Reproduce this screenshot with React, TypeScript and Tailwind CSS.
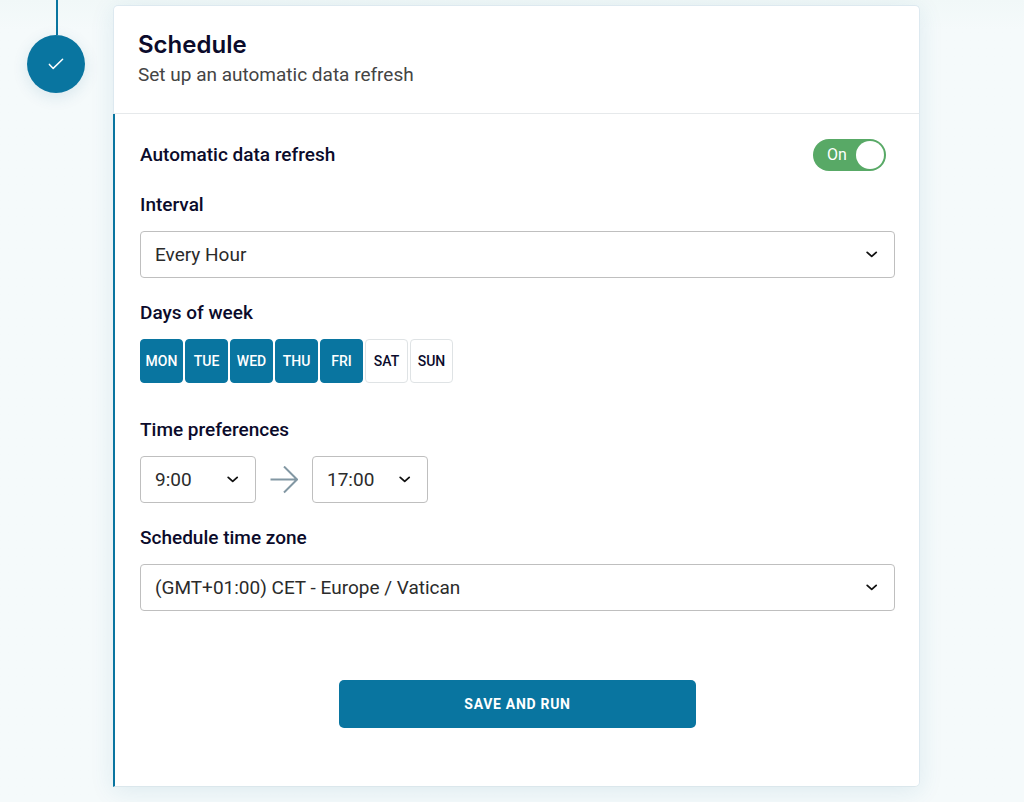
import { useState } from "react";
import type { ReactNode } from "react";

const days = ["Mon", "Tue", "Wed", "Thu", "Fri", "Sat", "Sun"];

const hours = Array.from({ length: 24 }, (_, hour) => `${hour}:00`);

const intervals = ["Every Hour", "Every Day", "Every Week", "Every Month"];

const timeZones = [
  "(GMT+01:00) CET - Europe / Vatican",
  "(GMT+00:00) GMT - Europe / London",
  "(GMT-05:00) EST - America / New York",
];

const labelClass = "block text-[19px] leading-7 font-medium text-[#0b0b2b]";

interface SelectProps {
  id: string;
  label?: string;
  options: string[];
  defaultValue: string;
  className?: string;
}

function Select({ id, label, options, defaultValue, className = "w-full" }: SelectProps) {
  return (
    <div className={`relative ${className}`}>
      <select
        id={id}
        aria-label={label}
        defaultValue={defaultValue}
        className="block h-[47px] w-full appearance-none rounded-[4px] border border-[#bfbfbf] bg-white pt-[2px] pr-10 pl-[14px] text-[19px] text-[#2b2b2b]"
      >
        {options.map((option) => (
          <option key={option}>{option}</option>
        ))}
      </select>
      <svg
        viewBox="0 0 14 10"
        className="pointer-events-none absolute top-[19px] right-4 h-[10px] w-[14px]"
        fill="none"
        stroke="#111"
        strokeWidth="1.8"
        strokeLinecap="round"
        strokeLinejoin="round"
      >
        <path d="M2.2 2.4 L6.7 6.4 L11.2 2.4" />
      </svg>
    </div>
  );
}

function Field({ id, label, children }: { id: string; label: string; children: ReactNode }) {
  return (
    <div>
      <label htmlFor={id} className={`${labelClass} mb-3`}>
        {label}
      </label>
      {children}
    </div>
  );
}

export default function App() {
  const [enabled, setEnabled] = useState(true);
  const [selected, setSelected] = useState(["Mon", "Tue", "Wed", "Thu", "Fri"]);

  const toggleDay = (day: string) =>
    setSelected((current) =>
      current.includes(day) ? current.filter((d) => d !== day) : [...current, day]
    );

  return (
    <main className="flex min-h-screen items-start bg-[#f5fafb] bg-linear-to-b from-[#f1f8f8] to-[#f5fafb] to-[30px] pr-[104px] pb-3 pl-[27px] font-['Roboto',sans-serif]">
      {/* Step marker */}
      <div className="mr-7 flex shrink-0 flex-col items-center">
        <div className="ml-0.5 h-[35px] w-[2px] bg-[#0975a0]" />
        <div className="flex size-[58px] items-center justify-center rounded-full bg-[#0975a0] shadow-[0_4px_16px_rgba(20,90,130,0.12)]">
          <svg viewBox="0 0 18 14" className="h-[14px] w-[18px]" fill="none" stroke="#fff" strokeWidth="1.5" strokeLinecap="round" strokeLinejoin="round">
            <path d="M2.4 7.4 L6.2 11.4 L15.6 2.2" />
          </svg>
        </div>
      </div>

      <section className="mt-[5px] min-w-0 grow rounded-[5px] rounded-bl-none shadow-[0_4px_24px_rgba(30,110,150,0.11)]">
        <header className="rounded-t-[5px] border border-[#dde9f0] border-b-[#e6e9eb] bg-white px-6 pt-[23px] pb-6">
          <h2 className="font-['Inter',sans-serif] text-[24px] leading-8 font-semibold text-[#0b0b2b]">Schedule</h2>
          <p className="text-[19px] leading-7 text-[#444]">Set up an automatic data refresh</p>
        </header>

        <div className="rounded-br-[5px] border-r border-b border-l-2 border-r-[#dde9f0] border-b-[#dbe7ec] border-l-[#0975a0] bg-white pt-[25px] pr-6 pb-[58px] pl-[25px]">
          <div className="mb-5 flex items-center justify-between pr-[9px]">
            <label htmlFor="auto-refresh" className={labelClass}>
              Automatic data refresh
            </label>
            <label className="relative flex h-8 w-[73px] cursor-pointer items-center rounded-full bg-gray-400 has-checked:bg-[#58a966]">
              <input
                id="auto-refresh"
                type="checkbox"
                role="switch"
                checked={enabled}
                onChange={() => setEnabled(!enabled)}
                className="peer absolute inset-0 cursor-pointer appearance-none rounded-full"
              />
              <span className="ml-auto pr-3 text-[16px] text-white peer-checked:mr-auto peer-checked:ml-0 peer-checked:pr-0 peer-checked:pl-[14px]">
                {enabled ? "On" : "Off"}
              </span>
              <span className="pointer-events-none absolute left-[2px] size-7 rounded-full bg-white peer-checked:right-[2px] peer-checked:left-auto" />
            </label>
          </div>

          <div className="mb-[21px]">
            <Field id="interval" label="Interval">
              <Select id="interval" options={intervals} defaultValue="Every Hour" />
            </Field>
          </div>

          <fieldset className="mb-[33px]">
            <legend className={`${labelClass} mb-3`}>Days of week</legend>
            <div className="flex gap-[2px]">
              {days.map((day) => (
                <button
                  key={day}
                  type="button"
                  aria-pressed={selected.includes(day)}
                  onClick={() => toggleDay(day)}
                  className="h-11 w-[43px] rounded-[4px] border border-[#dfe3e5] bg-white text-[14px] font-medium text-[#0b0b2b] uppercase aria-pressed:border-[#0975a0] aria-pressed:bg-[#0975a0] aria-pressed:text-white"
                >
                  {day}
                </button>
              ))}
            </div>
          </fieldset>

          <fieldset className="mb-[21px]">
            <legend className={`${labelClass} mb-3`}>Time preferences</legend>
            <div className="flex items-center gap-[14px]">
              <Select id="time-from" label="From" options={hours} defaultValue="9:00" className="w-[116px]" />
              <svg viewBox="0 0 28 28" className="size-7" fill="none" stroke="#8297a3" strokeWidth="2">
                <path d="M0.5 13.5 H27 M14 0.5 L27 13.5 L14 26.5" />
              </svg>
              <Select id="time-to" label="To" options={hours} defaultValue="17:00" className="w-[116px]" />
            </div>
          </fieldset>

          <Field id="time-zone" label="Schedule time zone">
            <Select id="time-zone" options={timeZones} defaultValue={timeZones[0]} />
          </Field>

          <button
            type="submit"
            className="mx-auto mt-[69px] block h-12 w-full max-w-[357px] rounded-[5px] bg-[#0975a0] text-[14px] font-bold tracking-wider text-white uppercase"
          >
            Save and run
          </button>
        </div>
      </section>
    </main>
  );
}
